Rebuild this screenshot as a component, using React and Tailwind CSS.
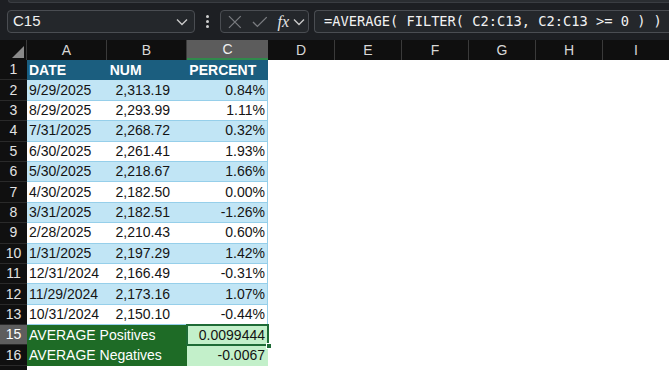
import React from "react";

const rows = [
  ["9/29/2025", "2,313.19", "0.84%"],
  ["8/29/2025", "2,293.99", "1.11%"],
  ["7/31/2025", "2,268.72", "0.32%"],
  ["6/30/2025", "2,261.41", "1.93%"],
  ["5/30/2025", "2,218.67", "1.66%"],
  ["4/30/2025", "2,182.50", "0.00%"],
  ["3/31/2025", "2,182.51", "-1.26%"],
  ["2/28/2025", "2,210.43", "0.60%"],
  ["1/31/2025", "2,197.29", "1.42%"],
  ["12/31/2024", "2,166.49", "-0.31%"],
  ["11/29/2024", "2,173.16", "1.07%"],
  ["10/31/2024", "2,150.10", "-0.44%"],
];

const Chevron = () => (
  <svg width="12" height="8" viewBox="0 0 12 8" fill="none">
    <path d="M1 1.5 L6 6.5 L11 1.5" stroke="#c8c8c8" strokeWidth="1.4" />
  </svg>
);

function RowHead({ n, active }) {
  return (
    <div
      className={`w-[27px] shrink-0 flex items-center justify-center text-[14px] border-b border-[#2a2a2a] ${
        active ? "bg-[#5e5e5e] text-white" : "bg-[#101010] text-[#e2e2e2]"
      }`}
    >
      {n}
    </div>
  );
}

export default function App() {
  return (
    <div
      className="w-[669px] h-[370px] overflow-hidden bg-[#1d1f23] flex flex-col"
      style={{ fontFamily: '"Liberation Sans", Arial, sans-serif' }}
    >
      {/* top strip */}
      <div className="h-[3px] ml-[8px] bg-[#2a2d31] rounded-bl-[5px] border-b border-l border-[#3a3d42]" />
      {/* toolbar */}
      <div className="h-[37px] flex items-start pt-[7px] pl-[7px] gap-[5px]">
        <div className="w-[188px] h-[23px] rounded-[4px] border border-[#4a4d52] bg-[#24272b] flex items-center justify-between pl-[5px] pr-[6px]">
          <span className="text-[15px] text-[#f0f0f0]">C15</span>
          <Chevron />
        </div>
        <div className="w-[15px] h-[23px] flex flex-col items-center justify-center gap-[2px]">
          <div className="w-[3px] h-[3px] rounded-full bg-[#cfcfcf]" />
          <div className="w-[3px] h-[3px] rounded-full bg-[#cfcfcf]" />
          <div className="w-[3px] h-[3px] rounded-full bg-[#cfcfcf]" />
        </div>
        <div className="w-[89px] h-[23px] rounded-[4px] border border-[#4a4d52] bg-[#24272b] flex items-center pl-[7px] pr-[3px]">
          <svg width="14" height="14" viewBox="0 0 14 14" fill="none">
            <path d="M1 1 L13 13 M13 1 L1 13" stroke="#7a7c80" strokeWidth="1.3" />
          </svg>
          <svg className="ml-[10px]" width="16" height="12" viewBox="0 0 16 12" fill="none">
            <path d="M1 6 L5.5 10.5 L15 1" stroke="#7a7c80" strokeWidth="1.3" />
          </svg>
          <span
            className="ml-[10px] text-[16px] italic text-[#e6e6e6] leading-none"
            style={{ fontFamily: '"Liberation Serif", "Times New Roman", serif' }}
          >
            fx
          </span>
          <span className="ml-[4px] flex items-center">
            <Chevron />
          </span>
        </div>
        <div className="flex-1 h-[23px] rounded-l-[4px] border border-r-0 border-[#4a4d52] bg-[#24272b] flex items-center pl-[9px] whitespace-nowrap overflow-hidden">
          <span
            className="text-[13.7px] text-[#f2f2f2]"
            style={{ fontFamily: '"DejaVu Sans Mono", "Liberation Mono", monospace' }}
          >
            =AVERAGE( FILTER( C2:C13, C2:C13 &gt;= 0 ) )
          </span>
        </div>
      </div>

      {/* column headers */}
      <div className="h-[20px] flex bg-[#0f0f0f] text-[14px] text-[#d8d8d8]">
        <div className="w-[27px] shrink-0 relative border-r border-[#3a3a3a]">
          <svg className="absolute right-[2px] bottom-[2px]" width="12" height="12" viewBox="0 0 12 12">
            <path d="M12 0 L12 12 L0 12 Z" fill="#8a8a8a" />
          </svg>
        </div>
        <div className="w-[80px] shrink-0 flex items-center justify-center border-r border-[#3a3a3a]">A</div>
        <div className="w-[80px] shrink-0 flex items-center justify-center border-r border-[#3a3a3a]">B</div>
        <div className="w-[81px] shrink-0 flex items-center justify-center bg-[#5c5c5c] border-b-2 border-[#2f8a4b] text-[#f0f0f0]">C</div>
        {["D", "E", "F", "G", "H", "I"].map((c) => (
          <div key={c} className="w-[67px] shrink-0 flex items-center justify-center border-r border-[#3a3a3a]">
            {c}
          </div>
        ))}
      </div>

      {/* body */}
      <div className="flex-1 flex flex-col bg-white text-[14px] text-[#141414]">
        <div className="h-[20.4px] flex">
          <RowHead n={1} />
          <div className="w-[241px] shrink-0 flex bg-[#1b5e7f] text-white font-bold border-r border-[#1b5e7f]">
            <div className="w-[80px] flex items-center pl-[2px]">DATE</div>
            <div className="w-[80px] flex items-center pl-[3px]">NUM</div>
            <div className="w-[81px] flex items-center pl-[3px]">PERCENT</div>
          </div>
          <div className="flex-1" />
        </div>
        {rows.map((r, i) => (
          <div key={i} className="h-[20.4px] flex">
            <RowHead n={i + 2} />
            <div
              className={`w-[241px] shrink-0 flex border-b border-r border-[#96cfea] ${
                i % 2 === 0 ? "bg-[#c1e5f5]" : "bg-white"
              }`}
            >
              <div className="w-[80px] flex items-center pl-[2px]">{r[0]}</div>
              <div className="w-[80px] flex items-center justify-end pr-[17px]">{r[1]}</div>
              <div className="w-[80px] flex items-center justify-end pr-[2px]">{r[2]}</div>
            </div>
            <div className="flex-1" />
          </div>
        ))}
        <div className="h-[20.4px] flex">
          <RowHead n={15} active />
          <div className="w-[160px] shrink-0 flex items-center pl-[2px] bg-[#1e6b26] text-white">AVERAGE Positives</div>
          <div className="w-[81px] shrink-0 relative flex items-center justify-end pr-[3px] bg-[#c3f0ca]">
            0.0099444
            <div className="absolute -left-[1px] -top-[1px] -right-[1px] -bottom-[1px] border-2 border-[#1e6b36]" />
            <div className="absolute -right-[4px] -bottom-[4px] w-[6px] h-[6px] bg-[#1e6b36] border border-white" />
          </div>
          <div className="flex-1" />
        </div>
        <div className="h-[20.4px] flex">
          <RowHead n={16} />
          <div className="w-[160px] shrink-0 flex items-center pl-[2px] bg-[#1e6b26] text-white">AVERAGE Negatives</div>
          <div className="w-[81px] shrink-0 flex items-center justify-end pr-[3px] bg-[#c3f0ca]">-0.0067</div>
          <div className="flex-1" />
        </div>
        <div className="flex-1 flex">
          <div className="w-[27px] shrink-0 bg-[#101010]" />
        </div>
      </div>
    </div>
  );
}
